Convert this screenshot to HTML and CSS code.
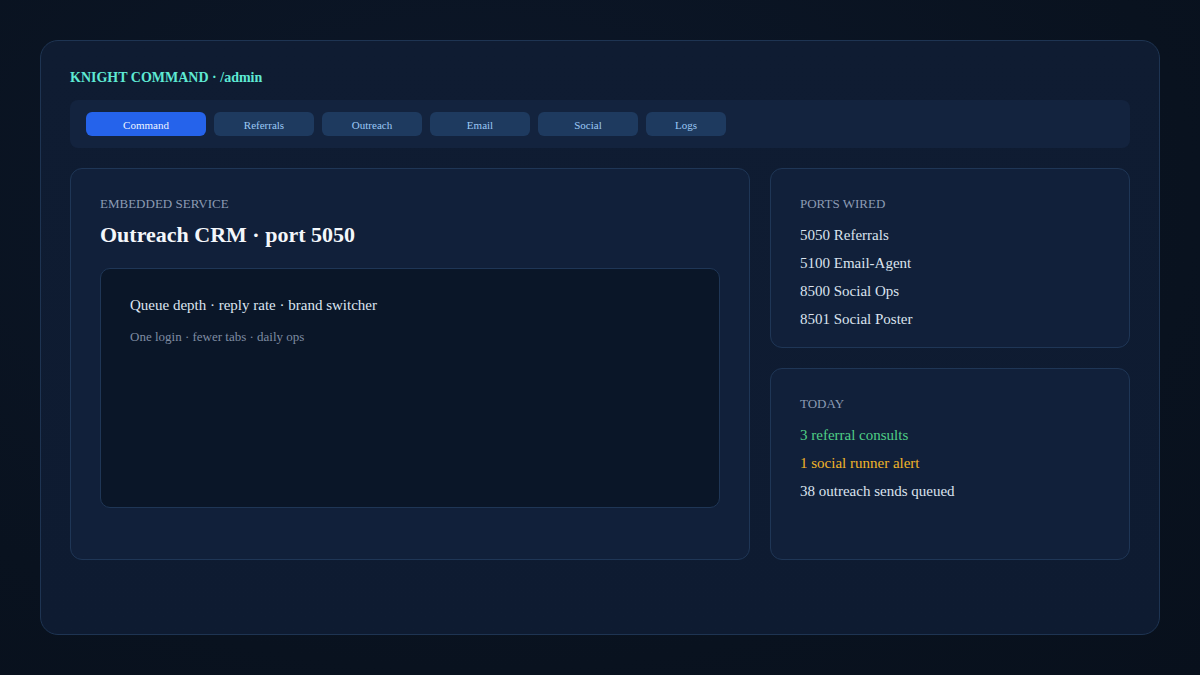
FILE: index.html
```html
<!DOCTYPE html>
<html lang="en">
<head>
<meta charset="utf-8">
<title>Knight Command · /admin</title>
<link rel="stylesheet" href="styles.css">
</head>
<body>
<div class="shell">
  <div class="brand">KNIGHT COMMAND · /admin</div>
  <nav class="tabs">
    <span class="tab tab-active w120">Command</span>
    <span class="tab w100">Referrals</span>
    <span class="tab w100">Outreach</span>
    <span class="tab w100">Email</span>
    <span class="tab w100">Social</span>
    <span class="tab w80">Logs</span>
  </nav>
  <div class="main">
    <section class="card card-main">
      <div class="label">EMBEDDED SERVICE</div>
      <h1 class="title">Outreach CRM · port 5050</h1>
      <div class="embed">
        <div class="embed-line">Queue depth · reply rate · brand switcher</div>
        <div class="embed-sub">One login · fewer tabs · daily ops</div>
      </div>
    </section>
    <div class="side">
      <section class="card">
        <div class="label">PORTS WIRED</div>
        <ul class="list">
          <li>5050 Referrals</li>
          <li>5100 Email-Agent</li>
          <li>8500 Social Ops</li>
          <li>8501 Social Poster</li>
        </ul>
      </section>
      <section class="card">
        <div class="label">TODAY</div>
        <ul class="list">
          <li class="ok">3 referral consults</li>
          <li class="warn">1 social runner alert</li>
          <li>38 outreach sends queued</li>
        </ul>
      </section>
    </div>
  </div>
</div>
</body>
</html>
```

FILE: styles.css
```css
* { box-sizing: border-box; }
html, body { margin: 0; padding: 0; }
body {
  width: 1200px;
  height: 675px;
  overflow: hidden;
  font-family: "Liberation Serif", "Times New Roman", serif;
  background: radial-gradient(ellipse at 40% 30%, #0c1729 0%, #09121f 70%, #08101c 100%);
  padding: 40px;
}
.shell {
  width: 1120px;
  height: 595px;
  border: 1px solid #1e3452;
  border-radius: 18px;
  background: linear-gradient(180deg, #0f1c32 0%, #0e1b31 100%);
  padding: 29px 29px;
}
.brand {
  font-weight: bold;
  font-size: 14px;
  line-height: 16px;
  color: #5eead4;
  margin-bottom: 14px;
}
.tabs {
  display: flex;
  gap: 8px;
  background: #13233e;
  border-radius: 8px;
  padding: 12px 16px;
  height: 48px;
  margin-bottom: 20px;
}
.tab {
  height: 24px;
  line-height: 24px;
  padding-top: 1px;
  text-align: center;
  font-size: 11px;
  border-radius: 6px;
  background: #1e3a5f;
  color: #9cc8f5;
}
.tab-active { background: #2563eb; color: #eef4ff; }
.w120 { width: 120px; }
.w100 { width: 100px; }
.w80 { width: 80px; }
.main {
  display: grid;
  grid-template-columns: 680px 360px;
  gap: 20px;
  height: 392px;
}
.card {
  border: 1px solid #1f3656;
  border-radius: 12px;
  background: #11203a;
  padding: 28px 29px 29px;
}
.side {
  display: grid;
  grid-template-rows: 180px 1fr;
  gap: 20px;
}
.label {
  font-size: 13px;
  line-height: 14px;
  color: #8c9bb3;
}
.title {
  margin: 10px 0 19px;
  font-size: 22px;
  line-height: 28px;
  font-weight: bold;
  color: #f4f7fb;
}
.embed {
  height: 240px;
  border: 1px solid #1f3656;
  border-radius: 10px;
  background: #0a1628;
  padding: 28px 29px;
}
.embed-line {
  font-size: 15px;
  line-height: 16px;
  color: #dde5f0;
}
.embed-sub {
  margin-top: 17px;
  font-size: 13px;
  line-height: 14px;
  color: #7f8ca2;
}
.list {
  list-style: none;
  margin: 10px 0 0;
  padding: 0;
}
.list li {
  font-size: 15px;
  line-height: 28px;
  color: #dbe3ee;
}
.list li.ok { color: #4fcf86; }
.list li.warn { color: #f0b429; }
```
